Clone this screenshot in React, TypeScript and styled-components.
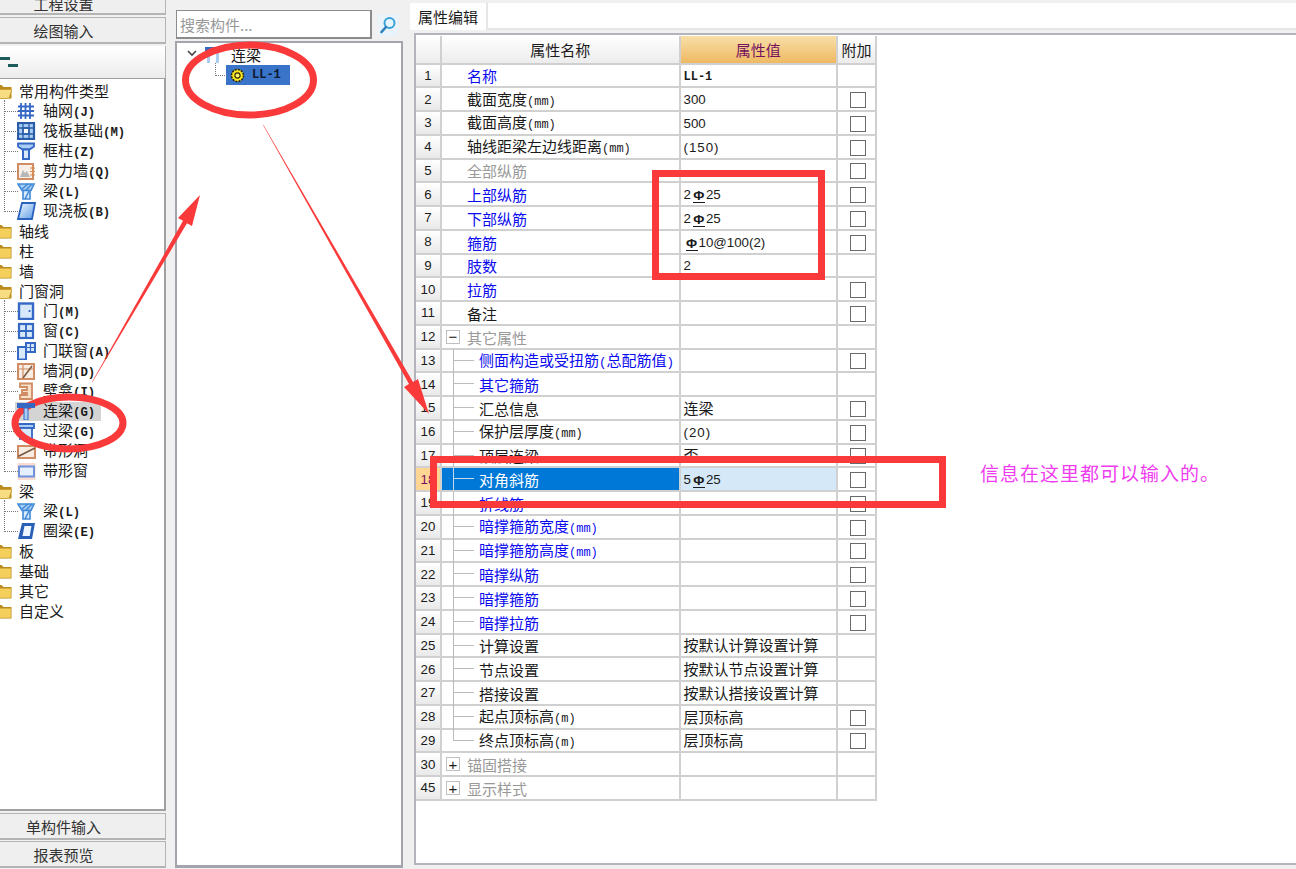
import React from 'react'
import styled, { createGlobalStyle } from 'styled-components'

const CJK = '"Noto Sans CJK SC", "Liberation Sans", sans-serif'
const LINE = '#d0d0d0'

const GlobalStyle = createGlobalStyle`
  html, body {
    margin: 0;
    padding: 0;
    background: #f0f0f0;
    overflow: hidden;
  }
  * {
    box-sizing: border-box;
  }
`

const Page = styled.div`
  position: relative;
  display: flex;
  width: 1296px;
  height: 869px;
  overflow: hidden;
  background: #f0f0f0;
  color: #1a1a1a;
  font-family: ${CJK};
  font-size: 15px;
`

/* ---------- left column ---------- */
const LeftColumn = styled.div`
  flex: none;
  display: flex;
  flex-direction: column;
  width: 204px;
  height: 881px;
  margin: -12px 0 0 -38px;
`
const NavButton = styled.div<{ $gap?: number }>`
  flex: none;
  height: 27px;
  margin-bottom: ${p => p.$gap ?? 2}px;
  display: flex;
  align-items: center;
  justify-content: center;
  background: #efefef;
  border: 1px solid #b4b4b4;
  border-width: 1px 1px 2px 0;
  color: #333;
  &:first-child {
    padding-top: 4px;
  }
`
const ToolStrip = styled.div`
  flex: none;
  height: 32px;
  display: flex;
  flex-direction: column;
  padding: 11px 0 0 38px;
  background: linear-gradient(#ffffff, #ececec);
  border-right: 1px solid #b4b4b4;
  gap: 4px;
`
const Dash = styled.span<{ $left: number; $width: number }>`
  display: block;
  height: 3px;
  width: ${p => p.$width}px;
  margin-left: ${p => p.$left}px;
  background: #1c5a5c;
`
const TreePanel = styled.div`
  flex: 1;
  margin-bottom: 2px;
  padding-top: 2px;
  background: #fff;
  border: 1px solid #a0a0a0;
  border-width: 1px 2px 2px 0;
  overflow: hidden;
`
const FolderRow = styled.div`
  position: relative;
  z-index: 1;
  height: 20px;
  display: flex;
  align-items: center;
  padding-left: 33px;
  gap: 7px;
`
const ChildRow = styled.div<{ $active?: boolean }>`
  position: relative;
  height: 20px;
  display: flex;
  align-items: center;
  padding-left: 56px;
  gap: 7px;
  &::before {
    content: '';
    position: absolute;
    left: 42px;
    top: -10px;
    width: 13px;
    height: 20px;
    border-left: 1px dotted #777;
    border-bottom: 1px dotted #777;
  }
  &:first-child::before {
    top: -1px;
    height: 11px;
  }
  ${p =>
    p.$active &&
    `
    &::after {
      content: '';
      position: absolute;
      left: 53px;
      top: 1px;
      width: 86px;
      height: 19px;
      background: #d4d4d4;
      z-index: 0;
    }
    & > * { position: relative; z-index: 1; }
  `}
`
const Suffix = styled.span`
  font-family: "Liberation Mono", monospace;
  font-size: 12.3px;
  font-weight: 700;
`
const Label = styled.span`
  white-space: nowrap;
  line-height: 20px;
`

/* ---------- middle column ---------- */
const MiddleColumn = styled.div`
  flex: none;
  display: flex;
  flex-direction: column;
  width: 228px;
  height: 868px;
  margin-left: 9px;
  padding-top: 10px;
`
const SearchRow = styled.div`
  flex: none;
  display: flex;
  align-items: center;
  height: 29px;
  margin: 0 0 2px 1px;
`
const SearchBox = styled.div`
  width: 196px;
  height: 29px;
  display: flex;
  align-items: center;
  padding-left: 3px;
  background: #fff;
  border: 1px solid #8c8c8c;
  border-width: 1px 2px 2px 1px;
  color: #999;
`
const SearchButton = styled.div`
  width: 20px;
  height: 22px;
  margin-left: 6px;
  display: flex;
  align-items: center;
  justify-content: center;
  background: #eaf3fa;
`
const MemberPanel = styled.div`
  flex: 1;
  padding: 1px 0 0 10px;
  background: #fff;
  border: 2px solid #a4a4ac;
  border-width: 2px 2px 3px 2px;
`
const MemberRoot = styled.div`
  height: 21px;
  display: flex;
  align-items: center;
  gap: 9px;
`
const MemberLabel = styled.span`
  margin-left: -2px;
  line-height: 20px;
`
const MemberChild = styled.div`
  position: relative;
  height: 20px;
  margin-left: 39px;
  width: 64px;
  display: flex;
  align-items: center;
  gap: 7px;
  padding-left: 4px;
  background: #3a74c8;
  color: #0c1a30;
  &::before {
    content: '';
    position: absolute;
    left: -11px;
    top: -2px;
    width: 11px;
    height: 12px;
    border-left: 1px dotted #777;
    border-bottom: 1px dotted #777;
  }
`

/* ---------- right column ---------- */
const RightColumn = styled.div`
  flex: 1;
  display: flex;
  flex-direction: column;
  min-width: 0;
  margin-left: 7px;
  padding: 3px 0 4px;
`
const TabStrip = styled.div`
  flex: none;
  display: flex;
  height: 27px;
  background: #fff;
`
const Tab = styled.div`
  width: 78px;
  display: flex;
  align-items: center;
  padding-left: 8px;
  background: #fff;
  border-right: 2px solid #e6e6e6;
`
const TabFill = styled.div`
  flex: 1;
  border-bottom: 2px solid #e6e6e6;
`
const SheetPanel = styled.div`
  flex: 1;
  margin: 3px 0 0 4px;
  padding: 1px 0 0 0;
  background: #fff;
  border: 2px solid #b4b4bc;
  border-right: none;
`
const Sheet = styled.div`
  width: 461px;
`
const columns = '26px 238.5px 157.5px 39px'
const HeadRow = styled.div`
  display: grid;
  grid-template-columns: ${columns};
  height: 28.5px;
`
const HeadCell = styled.div<{ $accent?: boolean }>`
  display: flex;
  align-items: center;
  justify-content: center;
  background: ${p =>
    p.$accent ? 'linear-gradient(#f8dfa8, #efb963)' : 'linear-gradient(#ffffff, #ececec)'};
  color: ${p => (p.$accent ? '#74125e' : '#1a1a1a')};
  border-right: 2px solid ${LINE};
  border-bottom: 2px solid ${LINE};
`
const Row = styled.div`
  display: grid;
  grid-template-columns: ${columns};
  grid-template-rows: 23.75px;
  height: 23.75px;
  line-height: 18px;
`
const NumCell = styled.div<{ $selected?: boolean }>`
  display: flex;
  align-items: center;
  justify-content: center;
  padding-top: 1px;
  background: ${p =>
    p.$selected ? '#ffd593' : 'linear-gradient(#ffffff, #e9e9e9)'};
  color: ${p => (p.$selected ? '#74125e' : '#1a1a1a')};
  border-right: 2px solid ${LINE};
  border-bottom: 2px solid ${LINE};
  font-family: "Liberation Sans", sans-serif;
  font-size: 13.3px;
`
const tones = { black: '#1a1a1a', blue: '#0a0af0', gray: '#999' }
type Tone = keyof typeof tones

const NameCell = styled.div<{ $tone: Tone; $indent: number; $selected?: boolean }>`
  position: relative;
  display: flex;
  align-items: center;
  padding: 2px 0 0 ${p => p.$indent}px;
  background: ${p => (p.$selected ? '#0078d7' : '#fff')};
  color: ${p => (p.$selected ? '#fff' : tones[p.$tone])};
  border-right: 2px solid ${LINE};
  border-bottom: 2px solid ${LINE};
  white-space: nowrap;
`
const Branch = styled.span<{ $last?: boolean; $selected?: boolean }>`
  position: absolute;
  left: 11px;
  top: -1px;
  width: 20px;
  height: ${p => (p.$last ? '12px' : 'calc(100% + 3px)')};
  border-left: 1px solid ${p => (p.$selected ? '#c8d8e8' : '#bcbcbc')};
  &::after {
    content: '';
    position: absolute;
    left: 0;
    top: 11px;
    width: 20px;
    border-top: 1px solid ${p => (p.$selected ? '#c8d8e8' : '#bcbcbc')};
  }
`
const Toggle = styled.span`
  position: absolute;
  left: 4px;
  top: 4px;
  width: 14px;
  height: 14px;
  display: flex;
  align-items: center;
  justify-content: center;
  border: 1px solid #c0c0c0;
  background: #fff;
  color: #1a1a1a;
  font-family: "Liberation Sans", sans-serif;
  font-size: 15px;
  line-height: 1;
`
const ValueCell = styled.div<{ $selected?: boolean }>`
  display: flex;
  align-items: center;
  padding-left: 3px;
  background: ${p => (p.$selected ? '#d5e8f7' : '#fff')};
  border-right: 2px solid ${LINE};
  border-bottom: 2px solid ${LINE};
  white-space: nowrap;
`
const ExtraCell = styled.div`
  display: flex;
  align-items: center;
  justify-content: center;
  padding: 2px 0 0 2px;
  background: #fff;
  border-right: 2px solid ${LINE};
  border-bottom: 2px solid ${LINE};
`
const CheckBox = styled.span`
  width: 16px;
  height: 16px;
  background: #fff;
  border: 1.5px solid #6a6a6a;
`
const Ascii = styled.span<{ $wide?: boolean }>`
  font-family: "Liberation Sans", sans-serif;
  font-size: 13.3px;
  letter-spacing: ${p => (p.$wide ? '1px' : '0')};
`
const MonoAscii = styled.span<{ $heavy?: boolean }>`
  font-family: "Liberation Mono", monospace;
  font-size: 12px;
  font-weight: ${p => (p.$heavy ? 700 : 400)};
`
const Paren = styled.span`
  font-family: "Liberation Mono", monospace;
  font-size: 12.5px;
`
const Rebar = styled.span`
  display: inline-block;
  width: 12px;
  margin: 0 1px 0 2px;
  font-family: "Liberation Sans", sans-serif;
  font-size: 13.5px;
  font-weight: 700;
  line-height: 12px;
  text-align: center;
  border-bottom: 1.5px solid #1a1a1a;
  vertical-align: -1px;
`

/* ---------- annotations ---------- */
const Markup = styled.svg`
  position: absolute;
  left: 0;
  top: 0;
  pointer-events: none;
`
const Note = styled.div`
  position: absolute;
  left: 980px;
  top: 459px;
  color: #f03cf0;
  font-size: 19px;
  letter-spacing: 1px;
  line-height: 28px;
  white-space: nowrap;
`

/* ---------- icons ---------- */
const Folder = ({ open }: { open?: boolean }) => (
  <svg width="17" height="16" viewBox="0 0 17 16" style={{ flex: 'none' }}>
    <path d="M0.500 2h6l2 2h8v11.500H0.500z" fill="#b98c1c" />
    {open ? (
      <path d="M3 6.500h13.800L14 15.500H0.500z" fill="#f8dc84" stroke="#c89c2c" strokeWidth="0.8" />
    ) : (
      <path d="M1.200 5.500h14.600v9.300H1.200z" fill="#f4cf5c" />
    )}
  </svg>
)

const B = '#3468c4'
const L = '#a9cdf3'
const P = '#d6e8fa'
const O = '#d08c62'

const drawings: Record<string, React.ReactNode> = {
  grid: (
    <g stroke={B} strokeWidth="1.800" fill="none">
      <path d="M1 4.500h16M1 9h16M1 13.500h16M4 1v16M8.500 1v16M13 1v16" />
    </g>
  ),
  raft: (
    <g fill="none" stroke="#2a5ca8">
      <rect x="1" y="1" width="16" height="16" strokeWidth="2.200" fill={L} />
      <rect x="6" y="6" width="6" height="6" fill="#fff" strokeWidth="1.500" />
      <path d="M6 1v16M12 1v16M1 6h16M1 12h16" strokeWidth="1.300" />
    </g>
  ),
  column: (
    <g>
      <path d="M1 1.500h16v3l-4.500 3h-7L1 4.500z" fill={L} stroke={B} strokeWidth="1.800" />
      <path d="M6 7.500h6V17H6z" fill={P} stroke={B} strokeWidth="2" />
    </g>
  ),
  wall: (
    <g>
      <rect x="1" y="2" width="15" height="15" fill="#f8f0e8" stroke={O} strokeWidth="2" />
      <path d="M3 15l3-7 2 3 2-2 3 6z" fill="#b8b8b8" />
      <path d="M13 6h5M13 9.500h5M13 13h5" stroke="#e08a40" strokeWidth="1.200" />
    </g>
  ),
  beam: (
    <g>
      <path d="M1 2h16l-3 6.500H5z" fill={L} stroke="#3f8ad8" strokeWidth="1.600" />
      <path d="M6 8.500h7V17H6z" fill={P} stroke="#3f8ad8" strokeWidth="1.600" />
      <path d="M5 7l6-5M9 8l6-6M8 17l4-8" stroke="#3f8ad8" strokeWidth="1.500" />
    </g>
  ),
  slab: (
    <g>
      <path d="M5 1h13l-3 16H1z" fill="url(#slabFill)" stroke="#2a62c0" strokeWidth="1.800" />
    </g>
  ),
  door: (
    <g>
      <rect x="2" y="1.500" width="14" height="15.500" fill={P} stroke={B} strokeWidth="2.400" />
      <circle cx="12.500" cy="9" r="1.100" fill="#2a62c0" />
    </g>
  ),
  window: (
    <g fill={P} stroke={B}>
      <rect x="2" y="2" width="14" height="14" strokeWidth="2.200" />
      <path d="M9 2v14M2 9h14" strokeWidth="1.800" />
    </g>
  ),
  doorWindow: (
    <g fill={P} stroke={B} strokeWidth="2">
      <rect x="1" y="5" width="8" height="12.500" />
      <rect x="9" y="1" width="9" height="9" />
      <path d="M13.500 1v9M9 5.500h9" strokeWidth="1.200" />
    </g>
  ),
  hole: (
    <g fill="none" stroke={O}>
      <rect x="1" y="2" width="16" height="15" fill="#f8ede2" strokeWidth="2" />
      <path d="M6 2v15M1 7h16" strokeWidth="1.200" />
      <path d="M6 16L15 4" stroke="#7a5a40" strokeWidth="1.500" />
    </g>
  ),
  niche: (
    <path
      d="M3 1.500h12V17H3v-4h7v-2H5V8h5V5H3z"
      fill="#f8e0c8"
      stroke={O}
      strokeWidth="1.800"
    />
  ),
  link: (
    <g>
      <path d="M0 1h18v5H0z" fill={B} />
      <path d="M7 6h4v12H7z" fill={L} stroke={B} />
    </g>
  ),
  pair: (
    <g>
      <path d="M0 1h9v5H0z" fill={B} />
      <path d="M9 1h7v2H9z" fill={L} />
      <path d="M2 6h3v11H2zM11 3h3v14h-3z" fill={L} />
    </g>
  ),
  lintel: (
    <g>
      <path d="M1 2h16v4H1z" fill={L} stroke={B} strokeWidth="1.800" />
      <rect x="3" y="6" width="12" height="11" fill={P} stroke={B} strokeWidth="1.800" />
    </g>
  ),
  bandHole: (
    <g fill="none" stroke={O} strokeWidth="2">
      <rect x="1" y="4" width="17" height="12" fill="#f8ede2" />
      <path d="M1 14.500L18 6" stroke="#7a5a40" strokeWidth="1.800" />
    </g>
  ),
  bandWindow: (
    <g>
      <rect x="0.500" y="1" width="18" height="17" fill="#fbdcd2" />
      <rect x="2" y="4.500" width="15" height="10" fill="#e6f0fc" stroke="#6f92da" strokeWidth="2" />
    </g>
  ),
  ring: (
    <g>
      <path d="M5 1h13l-3 16H1z" fill="#2a5fb8" />
      <path d="M7.500 4h7l-1.800 10H5.500z" fill="#eef6ff" />
    </g>
  ),
}

const Pic = ({ kind }: { kind: string }) => (
  <svg width="19" height="18" viewBox="0 0 19 18" style={{ flex: 'none', marginLeft: -1 }}>
    <defs>
      <linearGradient id="slabFill" x1="0" y1="0" x2="1" y2="1">
        <stop offset="0" stopColor="#f4faff" />
        <stop offset="1" stopColor="#5c9ce4" />
      </linearGradient>
    </defs>
    {drawings[kind]}
  </svg>
)

const Gear = () => (
  <svg width="15" height="15" viewBox="0 0 15 15" style={{ flex: 'none' }}>
    <circle cx="7.500" cy="7.500" r="6" fill="#f8ea1c" stroke="#2c2408" strokeWidth="1.600" strokeDasharray="2 1.100" />
    <circle cx="7.500" cy="7.500" r="2.600" fill="#fff36a" stroke="#2c2408" strokeWidth="1.100" />
  </svg>
)

const Magnifier = () => (
  <svg width="18" height="18" viewBox="0 0 18 18">
    <circle cx="10.500" cy="7" r="5" fill="#e8f6ff" stroke="#3aa0d8" strokeWidth="2" />
    <path d="M7 11l-4.500 5" stroke="#2a80c0" strokeWidth="2.600" strokeLinecap="round" />
  </svg>
)

const Chevron = () => (
  <svg width="10" height="7" viewBox="0 0 10 7" style={{ flex: 'none', margin: '0 0 2px 0' }}>
    <path d="M1 1l4 4 4-4" fill="none" stroke="#444" strokeWidth="1.600" />
  </svg>
)

/* ---------- data ---------- */
type TreeChild = { icon: string; label: string; code: string; active?: boolean }
type TreeGroup = { label: string; open?: boolean; items?: TreeChild[] }

const tree: TreeGroup[] = [
  {
    label: '常用构件类型',
    open: true,
    items: [
      { icon: 'grid', label: '轴网', code: '(J)' },
      { icon: 'raft', label: '筏板基础', code: '(M)' },
      { icon: 'column', label: '框柱', code: '(Z)' },
      { icon: 'wall', label: '剪力墙', code: '(Q)' },
      { icon: 'beam', label: '梁', code: '(L)' },
      { icon: 'slab', label: '现浇板', code: '(B)' },
    ],
  },
  { label: '轴线' },
  { label: '柱' },
  { label: '墙' },
  {
    label: '门窗洞',
    open: true,
    items: [
      { icon: 'door', label: '门', code: '(M)' },
      { icon: 'window', label: '窗', code: '(C)' },
      { icon: 'doorWindow', label: '门联窗', code: '(A)' },
      { icon: 'hole', label: '墙洞', code: '(D)' },
      { icon: 'niche', label: '壁龛', code: '(I)' },
      { icon: 'link', label: '连梁', code: '(G)', active: true },
      { icon: 'lintel', label: '过梁', code: '(G)' },
      { icon: 'bandHole', label: '带形洞', code: '' },
      { icon: 'bandWindow', label: '带形窗', code: '' },
    ],
  },
  {
    label: '梁',
    open: true,
    items: [
      { icon: 'beam', label: '梁', code: '(L)' },
      { icon: 'ring', label: '圈梁', code: '(E)' },
    ],
  },
  { label: '板' },
  { label: '基础' },
  { label: '其它' },
  { label: '自定义' },
]

type Prop = {
  no: number
  name: string
  tone?: Tone
  value?: string
  check?: boolean
  kind?: 'plain' | 'sub' | 'last'
  toggle?: string
}

const props: Prop[] = [
  { no: 1, name: '名称', tone: 'blue', value: 'LL-1' },
  { no: 2, name: '截面宽度(mm)', value: '300', check: true },
  { no: 3, name: '截面高度(mm)', value: '500', check: true },
  { no: 4, name: '轴线距梁左边线距离(mm)', value: '(150)', check: true },
  { no: 5, name: '全部纵筋', tone: 'gray', check: true },
  { no: 6, name: '上部纵筋', tone: 'blue', value: '2Φ25', check: true },
  { no: 7, name: '下部纵筋', tone: 'blue', value: '2Φ25', check: true },
  { no: 8, name: '箍筋', tone: 'blue', value: 'Φ10@100(2)', check: true },
  { no: 9, name: '肢数', tone: 'blue', value: '2' },
  { no: 10, name: '拉筋', tone: 'blue', check: true },
  { no: 11, name: '备注', check: true },
  { no: 12, name: '其它属性', tone: 'gray', toggle: '−' },
  { no: 13, name: '侧面构造或受扭筋(总配筋值)', tone: 'blue', check: true, kind: 'sub' },
  { no: 14, name: '其它箍筋', tone: 'blue', kind: 'sub' },
  { no: 15, name: '汇总信息', value: '连梁', check: true, kind: 'sub' },
  { no: 16, name: '保护层厚度(mm)', value: '(20)', check: true, kind: 'sub' },
  { no: 17, name: '顶层连梁', value: '否', check: true, kind: 'sub' },
  { no: 18, name: '对角斜筋', value: '5Φ25', check: true, kind: 'sub' },
  { no: 19, name: '折线筋', tone: 'blue', check: true, kind: 'sub' },
  { no: 20, name: '暗撑箍筋宽度(mm)', tone: 'blue', check: true, kind: 'sub' },
  { no: 21, name: '暗撑箍筋高度(mm)', tone: 'blue', check: true, kind: 'sub' },
  { no: 22, name: '暗撑纵筋', tone: 'blue', check: true, kind: 'sub' },
  { no: 23, name: '暗撑箍筋', tone: 'blue', check: true, kind: 'sub' },
  { no: 24, name: '暗撑拉筋', tone: 'blue', check: true, kind: 'sub' },
  { no: 25, name: '计算设置', value: '按默认计算设置计算', kind: 'sub' },
  { no: 26, name: '节点设置', value: '按默认节点设置计算', kind: 'sub' },
  { no: 27, name: '搭接设置', value: '按默认搭接设置计算', kind: 'sub' },
  { no: 28, name: '起点顶标高(m)', value: '层顶标高', check: true, kind: 'sub' },
  { no: 29, name: '终点顶标高(m)', value: '层顶标高', check: true, kind: 'last' },
  { no: 30, name: '锚固搭接', tone: 'gray', toggle: '+' },
  { no: 45, name: '显示样式', tone: 'gray', toggle: '+' },
]

// CJK stays at 15px, latin runs sit in a smaller face like the original bitmap font
const Mixed = ({ text }: { text: string }) => (
  <span>
    {text.split(/([\x00-\x7f]+|Φ)/).map((part, i) => {
      if (!part) return null
      if (part === 'Φ') return <Rebar key={i}>Φ</Rebar>
      if (part.charCodeAt(0) >= 128) return <React.Fragment key={i}>{part}</React.Fragment>
      if (part === '(' || part === ')') return <Paren key={i}>{part}</Paren>
      if (/[A-Za-z]/.test(part)) return <MonoAscii key={i} $heavy={part === 'LL-1'}>{part}</MonoAscii>
      return (
        <Ascii key={i} $wide={part.startsWith('(')}>
          {part}
        </Ascii>
      )
    })}
  </span>
)

const PropRow = ({ item }: { item: Prop }) => {
  const selected = item.no === 18
  const nested = item.kind === 'sub' || item.kind === 'last'
  return (
    <Row>
      <NumCell $selected={selected}>{item.no}</NumCell>
      <NameCell $tone={item.tone ?? 'black'} $indent={nested ? 37 : 25} $selected={selected}>
        {item.toggle && <Toggle>{item.toggle}</Toggle>}
        {nested && <Branch $last={item.kind === 'last'} $selected={selected} />}
        <Mixed text={item.name} />
      </NameCell>
      <ValueCell $selected={selected}>{item.value && <Mixed text={item.value} />}</ValueCell>
      <ExtraCell>{item.check && <CheckBox />}</ExtraCell>
    </Row>
  )
}

const Annotations = () => (
  <Markup width="1296" height="869" viewBox="0 0 1296 869">
    <g fill="none" stroke="#fa3a3a" strokeWidth="7">
      <ellipse cx="69" cy="423" rx="54" ry="26" />
      <ellipse cx="249.500" cy="80" rx="64" ry="35" />
      <rect x="655.500" y="173.500" width="166" height="103" />
      <rect x="433.500" y="459.500" width="509" height="45" />
    </g>
    <g fill="#fa3a3a">
      <path d="M92 382L183 220.800 178 218 200 195 192 226 187 223.200 92.500 382z" />
      <path d="M263 125L409 384 404 387 429 414 418 379 413 382 263.500 125z" />
    </g>
  </Markup>
)

const App = () => (
  <Page>
    <GlobalStyle />
    <LeftColumn>
      <NavButton>工程设置</NavButton>
      <NavButton>绘图输入</NavButton>
      <ToolStrip>
        <Dash $left={0} $width={10} />
        <Dash $left={8} $width={10} />
      </ToolStrip>
      <TreePanel>
        {tree.map(group => (
          <div key={group.label + (group.items?.length ?? 0)}>
            <FolderRow>
              <Folder open={group.open} />
              <Label>{group.label}</Label>
            </FolderRow>
            {group.items && (
              <div>
                {group.items.map(item => (
                  <ChildRow key={item.label + item.code} $active={item.active}>
                    <Pic kind={item.icon} />
                    <Label>
                      {item.label}
                      <Suffix>{item.code}</Suffix>
                    </Label>
                  </ChildRow>
                ))}
              </div>
            )}
          </div>
        ))}
      </TreePanel>
      <NavButton $gap={1}>单构件输入</NavButton>
      <NavButton $gap={1}>报表预览</NavButton>
    </LeftColumn>

    <MiddleColumn>
      <SearchRow>
        <SearchBox>搜索构件...</SearchBox>
        <SearchButton>
          <Magnifier />
        </SearchButton>
      </SearchRow>
      <MemberPanel>
        <MemberRoot>
          <Chevron />
          <Pic kind="pair" />
          <MemberLabel>连梁</MemberLabel>
        </MemberRoot>
        <MemberChild>
          <Gear />
          <MonoAscii $heavy>LL-1</MonoAscii>
        </MemberChild>
      </MemberPanel>
    </MiddleColumn>

    <RightColumn>
      <TabStrip>
        <Tab>属性编辑</Tab>
        <TabFill />
      </TabStrip>
      <SheetPanel>
        <Sheet>
          <HeadRow>
            <HeadCell />
            <HeadCell>属性名称</HeadCell>
            <HeadCell $accent>属性值</HeadCell>
            <HeadCell>附加</HeadCell>
          </HeadRow>
          {props.map(item => (
            <PropRow key={item.no} item={item} />
          ))}
        </Sheet>
      </SheetPanel>
    </RightColumn>

    <Annotations />
    <Note>信息在这里都可以输入的。</Note>
  </Page>
)

export default App
